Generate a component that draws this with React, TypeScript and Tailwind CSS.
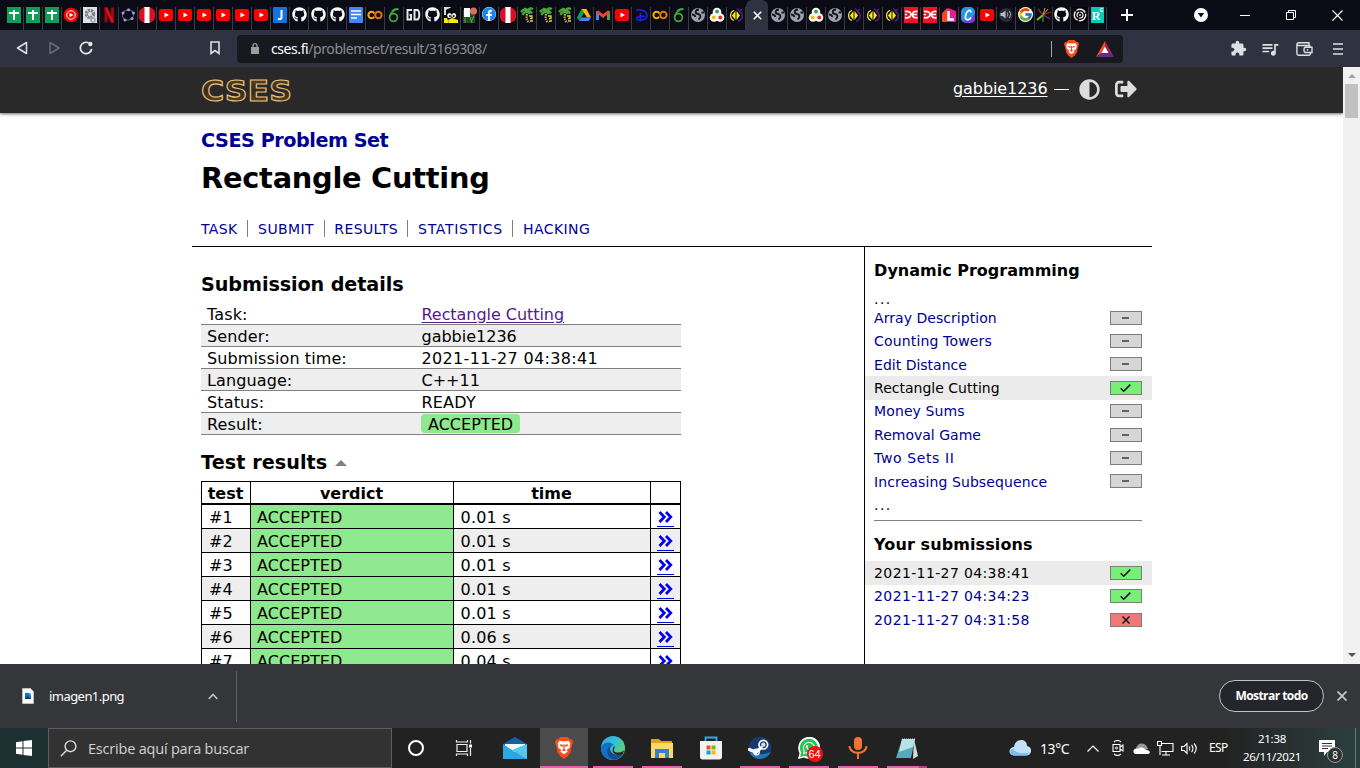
import React from "react";
import { FaGithub, FaFacebook, FaAdjust, FaSignOutAlt, FaWhatsapp } from "react-icons/fa";
import { FcGoogle } from "react-icons/fc";
import { MdExtension, MdQueueMusic } from "react-icons/md";

type IconProps = { children: React.ReactNode; w?: number; h?: number; box?: string };

function Glyph({ children, w = 16, h = 16, box = "0 0 16 16" }: IconProps) {
  return (
    <svg width={w} height={h} viewBox={box} fill="none" className="block shrink-0">
      {children}
    </svg>
  );
}

const favicons: Record<string, React.ReactNode> = {
  sheets: (
    <Glyph>
      <path fill="#0f9d58" d="M1 0h14v16H1z" />
      <path stroke="#fff" strokeWidth="2" d="M3 6h10M8 3v10" />
    </Glyph>
  ),
  music: (
    <Glyph>
      <circle cx="8" cy="8" r="7.3" fill="#f00" />
      <circle cx="8" cy="8" r="4.3" stroke="#fff" />
      <path fill="#fff" d="m6.5 5.7 4 2.3-4 2.3z" />
    </Glyph>
  ),
  gear: (
    <Glyph>
      <path fill="#dfe2e4" d="M1 0h14v16H1z" />
      <circle cx="8" cy="7" r="3.6" stroke="#7b858b" strokeWidth="3.4" strokeDasharray="2.2 .7" />
      <circle cx="11" cy="13" r="2" stroke="#9ba4a9" strokeWidth="1.5" />
    </Glyph>
  ),
  netflix: (
    <Glyph>
      <path fill="#9d0710" d="M3.500 0.500h3v15h-3zM10 .5h3v15h-3z" />
      <path fill="#e50914" d="M3.500.5h3l6.500 15h-3z" />
    </Glyph>
  ),
  geogebra: (
    <Glyph>
      <ellipse cx="8" cy="8" rx="5.700" ry="5" stroke="#666" transform="rotate(-20 8 8)" />
      <g fill="#9999ff">
        <circle cx="3" cy="6" r="1.500" /><circle cx="8.500" cy="2.700" r="1.500" />
        <circle cx="13.500" cy="6" r="1.500" /><circle cx="12" cy="11.600" r="1.500" /><circle cx="5" cy="13" r="1.500" />
      </g>
    </Glyph>
  ),
  peru: (
    <Glyph>
      <path fill="#fff" d="M5 0h6v16H5z" />
      <path fill="#d91023" d="M5.500.3a8 8 0 0 0 0 15.400zM10.500.3a8 8 0 0 1 0 15.400z" />
    </Glyph>
  ),
  youtube: (
    <Glyph>
      <rect x="1" y="2" width="14" height="12" rx="2" fill="#f00" />
      <path fill="#fff" d="m6.500 5.500 4.500 2.500-4.500 2.500z" />
    </Glyph>
  ),
  jbox: (
    <Glyph>
      <rect x="1" width="14" height="16" rx="1" fill="#1374e0" />
      <path stroke="#fff" strokeWidth="2" d="M9.500 3v7.500c0 1.800-2 2.200-3.500 1" />
    </Glyph>
  ),
  github: <FaGithub size={15} color="#fff" />,
  docs: (
    <Glyph>
      <rect x="1" width="14" height="16" rx="1" fill="#4285f4" />
      <path stroke="#fff" strokeWidth="1.700" d="M3 4h10M3 7.500h10M3 11h6" />
    </Glyph>
  ),
  colab: (
    <Glyph>
      <circle cx="4.600" cy="8" r="3.200" stroke="#f9ab00" strokeWidth="2" strokeDasharray="16 4" strokeDashoffset="-2" />
      <circle cx="11.400" cy="8" r="3.200" stroke="#e8710a" strokeWidth="2" />
    </Glyph>
  ),
  overleaf: (
    <Glyph>
      <circle cx="7.500" cy="10.500" r="3.900" stroke="#47a141" strokeWidth="1.800" />
      <path stroke="#47a141" strokeWidth="1.700" d="M4 9C5 5 8 2.500 12.500 1.800M6 4c2-2 4-2.300 6-2.200" />
    </Glyph>
  ),
  gd: (
    <Glyph>
      <path stroke="#e8e8e8" strokeWidth="2" d="M7 3H2.500v9.500H6V8H4.500M9.500 3v9.500H12c3 0 3-9.500 0-9.500H9.500z" />
    </Glyph>
  ),
  penguin: (
    <Glyph>
      <path fill="#d4dce0" d="M1 0h7L3 8H1z" />
      <path fill="#050505" d="M3 3c5-4 10-1 10 4l2 8H3z" />
      <ellipse cx="6.500" cy="8.500" rx="2.300" ry="2.500" fill="#fff" /><ellipse cx="11" cy="8.500" rx="2.100" ry="2.500" fill="#fff" />
      <circle cx="7" cy="9" r="1" fill="#000" /><circle cx="10.700" cy="9" r="1" fill="#000" />
      <path fill="#ffe600" d="m5 13 4-2 6 2v3H6z" />
      <path fill="#ffe600" d="M1 11h3l2 5H1z" />
    </Glyph>
  ),
  robot: (
    <Glyph>
      <path fill="#21501e" d="M1 3h12v13H1z" />
      <path fill="#fff" d="M2 1h6v9H2z" />
      <circle cx="11.500" cy="4" r="3.500" fill="#e0705c" />
      <path stroke="#63a34f" d="M3 11v5M8 10l2 6M12 9l-3 6" />
    </Glyph>
  ),
  facebook: <FaFacebook size={14} color="#1785f5" className="rounded-full bg-white" />,
  palm: (
    <Glyph>
      <path stroke="#4da33e" strokeWidth="2.400" d="M2 5c3-4 5-2 6 0M5 2c2-.5 3 0 4 2 1-3 3-3 5-2M3.500 8c1-3 4-4 8-2M8 4.500c2-1 4 0 5 2" />
      <path stroke="#cbb936" strokeWidth="2.200" strokeDasharray="1.500 .8" d="M8 7c-1 4 0 6 2 9" />
      <path stroke="#e8cf45" strokeWidth="1.300" d="M10 9h3v2.500h-2M11 14h3" />
    </Glyph>
  ),
  drive: (
    <Glyph>
      <path fill="#0f9d58" d="M5.500 2 1 10.500 3.200 14 8 6z" />
      <path fill="#ffba00" d="M5.500 2h5L15 10.500h-4z" />
      <path fill="#4285f4" d="M5.500 10.500H15L12.800 14H3.200z" />
    </Glyph>
  ),
  gmail: (
    <Glyph>
      <path fill="#4285f4" d="M1 4h3v9H1z" /><path fill="#34a853" d="M12 4h3v9h-3z" />
      <path stroke="#ea4335" strokeWidth="3" d="M2 4.500 8 9l6-4.500" />
    </Glyph>
  ),
  disney: (
    <Glyph>
      <path stroke="#1822dc" strokeWidth="1.700" d="M3 3c7-1 11 2 11 5.500 0 4.500-8 6-10 3.500-2-2 5-3.500 8-2.500M7.500 6v7.500" />
    </Glyph>
  ),
  globe: (
    <Glyph>
      <circle cx="8" cy="8" r="7" fill="#9ca3ad" />
      <path stroke="#11141c" strokeWidth="1.800" d="M9 2.500C4.500 3 5 6.500 8 7s3.500 3 .5 5.500M2 7.500c2 0 3 1 3.500 2.500M11.500 5.500H14" />
    </Glyph>
  ),
  balls: (
    <Glyph>
      <g fill="#fff"><circle cx="8" cy="5" r="4.300" /><circle cx="5" cy="10.500" r="4.300" /><circle cx="11" cy="10.500" r="4.300" /></g>
      <circle cx="8" cy="4.500" r="2" fill="#34a853" /><circle cx="4.700" cy="10.500" r="2" fill="#fbbc04" /><circle cx="11.300" cy="10.500" r="2" fill="#e6332a" />
    </Glyph>
  ),
  hive: (
    <Glyph>
      <path stroke="#52217a" strokeWidth="1.600" d="M9 1.500 11.500 4 14 2M11 5c4-.5 5 8-1 9" />
      <path stroke="#f5e838" strokeWidth="1.300" d="M6 3.500C1.500 5 1.500 12 6 13.500" />
      <path fill="#ffec1c" d="M7.500 4v9L4 8.500zM8.500 4 12 8.500 8.500 13z" />
    </Glyph>
  ),
  oe: (
    <Glyph>
      <path fill="#f11225" d="M1 0h14v16H1z" />
      <path stroke="#fff" strokeWidth="1.700" d="M2 4.500c4-.5 6 1 6 3s-2 3.700-6 3.200M14.500 4.500c-3-.5-5 .5-5 3s2 3.700 5 3.200M8 7.500h6M2 7.500h2" />
    </Glyph>
  ),
  lbox: (
    <Glyph>
      <path fill="#e81c8e" d="M1 15V6l6-5 8 3v11z" /><path fill="#f8481a" d="M1 15V7l5-6v14z" />
      <path stroke="#fff" strokeWidth="2.500" d="M7.500 4v8.500H13" />
    </Glyph>
  ),
  canva: (
    <Glyph>
      <rect x="1" width="14" height="16" rx="5" fill="#2597de" />
      <path fill="#7338e0" d="M3 14c4-2 9-1 12-8v6c0 3-2 4-5 4H6c-1 0-2-1-3-2z" />
      <path stroke="#fff" strokeWidth="1.700" d="M10.500 5.500c1-2-1-3-3-1s-3 7-1 8 4-1 4.500-2" />
    </Glyph>
  ),
  audio: (
    <Glyph>
      <circle cx="8" cy="8" r="7" fill="#292b39" />
      <path fill="#bbbdc6" d="M2.500 6h2L7.500 3.500v8L4.500 9h-2z" />
      <path stroke="#bbbdc6" d="M9 5.500c1 1 1 3 0 4M11 4c2 2 2 5 0 7" />
    </Glyph>
  ),
  google: <FcGoogle size={15} className="rounded-full bg-white" />,
  spider: (
    <Glyph>
      <path stroke="#7bbf2e" strokeWidth="2" d="M1 13 7 8" /><path stroke="#8a3420" strokeWidth="1.200" d="m7 8-5-6M7 8l8-3" />
      <path stroke="#d8a63c" d="m7 8 2-7M7 8l5-6" /><path stroke="#60388f" strokeWidth="1.200" d="m7 8 7 4" /><path stroke="#68a637" d="M7 8v7" />
    </Glyph>
  ),
  swirl: (
    <Glyph>
      <path fill="#050505" d="M1 0h14v16H1z" />
      <circle cx="8" cy="8" r="5.700" stroke="#eee" strokeWidth="1.400" strokeDasharray="10 1.200" />
      <circle cx="8" cy="8" r="3" stroke="#eee" strokeWidth="1.200" strokeDasharray="6 1" />
      <circle cx="8" cy="8" r="1" fill="#ddd" />
    </Glyph>
  ),
  rg: (
    <span className="flex h-4 w-[13px] justify-center bg-[#00ccbb] text-white">
      <span className="pt-[3px] font-['Liberation_Serif',serif] text-[12px] leading-[13px] font-bold">R</span>
      <span className="-ml-px text-[5px] leading-[7px] font-bold">G</span>
    </span>
  ),
};

const leftTabs = (
  "sheets sheets sheets music gear netflix geogebra peru youtube youtube youtube youtube youtube youtube jbox github github github docs " +
  "colab overleaf gd github penguin robot facebook peru palm palm palm drive gmail youtube disney colab overleaf globe balls hive"
).split(" ");
const midTabs = "globe globe balls globe hive hive hive oe oe lbox canva youtube audio google".split(" ");
const endTabs = "spider github swirl rg".split(" ");

function Tab({ name, narrow }: { name: string; narrow?: boolean }) {
  return (
    <div className={`${narrow ? "w-[18px]" : "w-[19px]"} flex h-[23px] shrink-0 items-start justify-center border-r border-[#3a3a42]`}>
      {favicons[name]}
    </div>
  );
}

function TabStrip() {
  return (
    <div className="flex h-[30px] shrink-0 bg-[#0b0b15] pl-[5px]">
      <div className="flex pt-[7px]">{leftTabs.map((n, i) => <Tab key={i} name={n} />)}</div>
      <div className="flex w-[22px] items-center justify-center rounded-t-md bg-[#2f3241]">
        <Glyph w={9} h={9} box="0 0 9 9"><path stroke="#fff" strokeWidth="1.600" d="m.8.8 7.400 7.400M8.200.8.8 8.200" /></Glyph>
      </div>
      <div className="flex pt-[7px] pl-px">
        {midTabs.map((n, i) => <Tab key={i} name={n} />)}
        {endTabs.map((n, i) => <Tab key={i} name={n} narrow />)}
      </div>
      <div className="ml-[14px] flex items-center">
        <Glyph w={12} h={12} box="0 0 12 12"><path stroke="#fff" strokeWidth="2" d="M6 0v12M0 6h12" /></Glyph>
      </div>
      <div className="ml-auto flex items-center pr-[17px]">
        <Glyph w={14} h={14} box="0 0 14 14"><circle cx="7" cy="7" r="7" fill="#fff" /><path fill="#0b0b15" d="M3.800 5h6.400L7 9.500z" /></Glyph>
        <span className="ml-8 h-px w-[10px] bg-white" />
        <span className="ml-9"><Glyph w={10} h={10} box="0 0 10 10"><path stroke="#fff" d="M.5 2.500h7v7h-7zM2.500 2V.5h7v7H8" /></Glyph></span>
        <span className="ml-9"><Glyph w={11} h={11} box="0 0 11 11"><path stroke="#fff" strokeWidth="1.200" d="m.5.5 10 10M10.500.5l-10 10" /></Glyph></span>
      </div>
    </div>
  );
}

const lionShield = "M8 0h8l2 2 3 1 1 3-1 2-2 9-3 4-4 3-4-3-3-4L3 8 2 6l1-3 3-1z";

function Lion({ w, h }: { w: number; h: number }) {
  return (
    <Glyph w={w} h={h} box="1 0 22 24">
      <path fill="#fb4a1c" d={lionShield} />
      <path fill="#fff" d="m7 4 3 .7h4L17 4l2 3-1 5-3 2 1 2-4 3-4-3 1-2-3-2-1-5z" />
      <path fill="#fb4a1c" d="m8 8 3 .8-.5 2L7 9zM16 8l-3 .8.500 2L17 9zM11.300 8h1.400v5l1.500 1.500-2.200 1-2.200-1 1.500-1.500z" />
    </Glyph>
  );
}

function Toolbar() {
  return (
    <div className="flex h-[37px] shrink-0 items-center bg-[#2f3241]">
      <div className="flex w-[237px] items-center pb-px pl-4">
        <Glyph w={12} h={14} box="0 0 12 14"><path stroke="#dedfe2" strokeWidth="1.500" strokeLinejoin="round" d="M10.500 1.500v11L1.500 7z" /></Glyph>
        <span className="ml-[21px]"><Glyph w={12} h={14} box="0 0 12 14"><path stroke="#686b78" strokeWidth="1.500" strokeLinejoin="round" d="M1 1.500v11L10 7z" /></Glyph></span>
        <span className="ml-[18px]">
          <Glyph w={14} h={14} box="0 0 14 14"><path stroke="#e9e9ec" strokeWidth="1.700" d="M9.500 1.800A5.700 5.700 0 1 0 12.700 8" /><circle cx="11.300" cy="3" r="2.200" fill="#e9e9ec" /></Glyph>
        </span>
        <span className="ml-[117px]"><Glyph w={10} h={14} box="0 0 10 14"><path stroke="#dedfe2" strokeWidth="1.600" d="M1 1h8v11.500L5 9.500l-4 3z" /></Glyph></span>
      </div>
      <div className="flex h-7 w-[886px] items-center rounded bg-[#17191f] pl-[14px] font-['Noto_Sans',sans-serif] text-[14px]">
        <Glyph w={8} h={11} box="0 0 8 11"><path fill="#9a9da4" d="M0 4h8v7H0z" /><path stroke="#9a9da4" strokeWidth="1.300" d="M2 5V2.700a2 2 0 0 1 4 0V5" /></Glyph>
        <span className="ml-3 tracking-[-0.42px] text-[#8b8d92]"><span className="text-white">cses.fi</span>/problemset/result/3169308/</span>
        <div className="ml-auto flex items-center pr-[9px]">
          <span className="mr-[11px] h-4 w-px bg-[#a5a6ab]" />
          <Lion w={17} h={18} />
          <span className="ml-4">
            <Glyph w={18} h={16} box="0 0 18 16"><path fill="#ff4724" d="M9 0 0 16l6-4 3-6z" /><path fill="#9e1f63" d="m9 0 9 16-6-4-3-6z" /><path fill="#662d91" d="M0 16h18l-6-4H6z" /><path fill="#fff" d="m9 5.500 3.500 6.500h-7z" /></Glyph>
          </span>
        </div>
      </div>
      <div className="flex flex-1 items-center justify-end pr-[17px] text-[#dedfe2]">
        <MdExtension size={17} />
        <MdQueueMusic size={20} className="ml-[13px]" />
        <span className="ml-[16px]">
          <Glyph w={17} h={14} box="0 0 17 14"><path stroke="#dedfe2" strokeWidth="1.400" d="M14 3.500H2.500a1.400 1.400 0 0 1 0-2.800H13v2.500M.9 2v9.500c0 1 .8 1.700 1.700 1.700H13c.8 0 1.400-.6 1.400-1.400V10.500M14 3.500v1.500M9.500 5.200H16v5.300H9.500c-2 0-2-5.300 0-5.300z" /><circle cx="11.500" cy="7.800" r=".9" fill="#dedfe2" /></Glyph>
        </span>
        <span className="ml-[20px]"><Glyph w={10} h={12} box="0 0 10 12"><path stroke="#dedfe2" strokeWidth="1.500" d="M0 1h10M0 6h10M0 11h10" /></Glyph></span>
      </div>
    </div>
  );
}

function SiteHeader() {
  return (
    <div className="flex h-[46px] shrink-0 items-center bg-[#292929] shadow-[0_1px_3px_rgba(0,0,0,0.6)]">
      <div className="mx-auto flex w-[960px] items-center px-[9px]">
        <svg width="92" height="28" viewBox="0 0 92 28" className="-mt-px block">
          <defs>
            <linearGradient id="gold" x1="0" x2="0" y1="0" y2="1"><stop offset="0" stopColor="#6b4c22" /><stop offset=".5" stopColor="#332a1f" /><stop offset="1" stopColor="#6b4c22" /></linearGradient>
          </defs>
          <text x="0" y="24.500" textLength="91" lengthAdjust="spacingAndGlyphs" fontFamily="DejaVu Sans" fontWeight="700" fontSize="29" fill="url(#gold)" stroke="#e8c07d" strokeWidth="1.100">CSES</text>
        </svg>
        <div className="ml-auto flex items-center pr-[6px] text-[16px] text-white">
          <span className="-mt-[2px] tracking-[-0.08px] underline underline-offset-2">gabbie1236</span>
          <span className="mb-px ml-[6px] h-px w-[15px] bg-white" />
          <FaAdjust size={21} color="#dcdcdc" className="mb-[2px] ml-[10px]" />
          <FaSignOutAlt size={22} color="#dcdcdc" className="mb-[2px] ml-[15px]" />
        </div>
      </div>
    </div>
  );
}

const nav = [
  { label: "TASK", cls: "pr-[9px] w-[47px] pl-[0.6px] tracking-[0.3px]" },
  { label: "SUBMIT", cls: "w-[77px] pl-[10.6px] tracking-[0.4px]" },
  { label: "RESULTS", cls: "w-[83px] pl-[9.8px] tracking-[0.4px]" },
  { label: "STATISTICS", cls: "w-[105px] pl-[10.6px] tracking-[0.7px]" },
  { label: "HACKING", cls: "pl-[10.6px] tracking-[0.4px]" },
];

const details = [
  ["Task:", "Rectangle Cutting"],
  ["Sender:", "gabbie1236"],
  ["Submission time:", "2021-11-27 04:38:41"],
  ["Language:", "C++11"],
  ["Status:", "READY"],
  ["Result:", "ACCEPTED"],
];

const valueStyle = [
  "pt-px text-[#551a8b] underline underline-offset-2 tracking-[-0.05px]",
  "pt-px",
  "pt-px tracking-[0.35px]",
  "pt-px",
  "pt-px tracking-[0.2px]",
  "h-[19px] rounded bg-[#8ee88e] px-[6.5px] pt-px tracking-[0.02px]",
];

const times = ["0.01 s", "0.01 s", "0.01 s", "0.01 s", "0.01 s", "0.06 s", "0.04 s"];

function Chevrons() {
  return (
    <span className="block h-4 w-[17px] border-b border-[#0000ee] pl-px">
      <Glyph w={15} h={13} box="0 0 15 13"><path stroke="#0000ee" strokeWidth="2.700" d="m1.500 1 4.800 5-4.800 5M8 1l4.800 5L8 11" /></Glyph>
    </span>
  );
}

type Status = "none" | "ok" | "bad";

function Badge({ status }: { status: Status }) {
  const bg = status === "none" ? "bg-[#d6d6d6]" : status === "ok" ? "bg-[#78f078]" : "bg-[#f07878]";
  return (
    <span className={`flex h-[14px] w-8 items-center justify-center border border-[#7c7c7c] ${bg}`}>
      {status === "none" && <span className="h-[2px] w-[7px] bg-[#626262]" />}
      {status === "ok" && <Glyph w={11} h={8} box="0 0 11 8"><path stroke="#111" strokeWidth="1.500" d="m.7 4.300 3 2.900L10.300.6" /></Glyph>}
      {status === "bad" && <Glyph w={8} h={8} box="0 0 8 8"><path stroke="#111" strokeWidth="1.500" d="m.5.5 7 7M7.500.5l-7 7" /></Glyph>}
    </span>
  );
}

function SideRow({ text, status, current, cls }: { text: string; status: Status; current?: boolean; cls?: string }) {
  return (
    <div className={`flex h-[23.4px] shrink-0 items-center justify-between pr-[10px] pl-[9.6px] text-[14px] ${current ? "bg-[#ebebeb] text-black" : "text-[#000094]"}`}>
      <span className={`pt-[1.4px] ${cls ?? ""}`}>{text}</span>
      <Badge status={status} />
    </div>
  );
}

const tasks: { text: string; status: Status; current?: boolean; cls?: string }[] = [
  { text: "Array Description", status: "none", cls: "tracking-[0.04px]" },
  { text: "Counting Towers", status: "none", cls: "tracking-[0.15px]" },
  { text: "Edit Distance", status: "none" },
  { text: "Rectangle Cutting", status: "ok", current: true },
  { text: "Money Sums", status: "none", cls: "tracking-[0.1px]" },
  { text: "Removal Game", status: "none" },
  { text: "Two Sets II", status: "none", cls: "tracking-[0.6px]" },
  { text: "Increasing Subsequence", status: "none", cls: "tracking-[0.1px]" },
];

function Page() {
  return (
    <div className="flex h-[597px] shrink-0 overflow-hidden bg-white font-['DejaVu_Sans',sans-serif] text-black">
      <div className="flex w-[1343px] flex-col">
        <SiteHeader />
        <div className="mx-auto flex w-[960px] flex-1 flex-col">
          <div className="h-[134px] shrink-0 border-b border-black px-[9px] pt-[17px]">
            <div className="pl-[0.6px] text-[19.2px] leading-[22px] font-bold tracking-[-0.46px] text-[#000094]">CSES Problem Set</div>
            <h1 className="mt-[9px] pl-[0.6px] text-[28.8px] leading-[34px] font-bold tracking-[-0.25px]">Rectangle Cutting</h1>
            <div className="mt-[25px] flex text-[14px] leading-[19px] text-[#000094]">
              {nav.map((n, i) => (
                <span key={n.label} className={`h-[17px] shrink-0 ${n.cls} ${i < nav.length - 1 ? "border-r border-[#808080]" : ""}`}>{n.label}</span>
              ))}
            </div>
          </div>
          <div className="flex flex-1">
            <div className="w-[672px] px-[9px] pt-[27px]">
              <h2 className="pl-[0.6px] text-[19.2px] leading-[22px] font-bold tracking-[-0.1px]">Submission details</h2>
              <div className="mt-[7px] w-[480px] text-[16px]">
                {details.map(([k, v], i) => (
                  <div key={k} className={`flex h-[22px] items-center border-b border-[#808080] pl-[6.6px] leading-[19px] ${i % 2 ? "bg-[#eeeeee]" : ""}`}>
                    <span className="w-[214.4px] pt-px tracking-[0.1px]">{k}</span>
                    <span className={valueStyle[i]}>{v}</span>
                  </div>
                ))}
              </div>
              <div className="mt-[17px] flex items-center pl-[0.6px] text-[19.2px] leading-[22px] font-bold tracking-[0.05px]">
                Test results
                <span className="ml-2"><Glyph w={12} h={6} box="0 0 12 6"><path fill="#808080" d="m6 0 6 6H0z" /></Glyph></span>
              </div>
              <div className="mt-[7px] w-[480px] border-t border-l border-black text-[16px]">
                <div className="grid h-[23px] grid-cols-[49px_203px_197px_30px] divide-x divide-black border-r border-b-2 border-black text-center leading-[23px] font-bold">
                  <span>test</span><span>verdict</span><span>time</span><span />
                </div>
                {times.map((t, i) => (
                  <div key={i} className={`grid h-6 grid-cols-[49px_203px_197px_30px] divide-x divide-black border-r border-b border-black leading-[25px] ${i % 2 ? "bg-[#eeeeee]" : ""}`}>
                    <span className="h-[23px] pl-[7.6px]">#{i + 1}</span>
                    <span className="h-[23px] bg-[#8ee88e] pl-[6.6px] tracking-[0.02px]">ACCEPTED</span>
                    <span className="h-[23px] pl-[7px] tracking-[0.2px]">{t}</span>
                    <span className="h-[23px] pt-[6px] pl-[6px]"><Chevrons /></span>
                  </div>
                ))}
              </div>
            </div>
            <div className="w-[288px] border-l border-black pt-[14px]">
              <h4 className="pl-[9.6px] text-[16px] leading-[20px] font-bold">Dynamic Programming</h4>
              <div className="mt-[8px] h-[17px] pl-[9.6px] text-[14px] leading-[21px] tracking-[1.4px]">...</div>
              {tasks.map((t) => <SideRow key={t.text} {...t} />)}
              <div className="h-[27px] pl-[9.6px] text-[14px] leading-[25px] tracking-[1.4px]">...</div>
              <div className="mx-[9px] mr-[10px] h-px bg-[#808080]" />
              <h4 className="mt-[14px] mb-[6px] pl-[9.6px] text-[16px] leading-[20px] font-bold tracking-[0.1px]">Your submissions</h4>
              <SideRow text="2021-11-27 04:38:41" status="ok" current cls="tracking-[0.37px]" />
              <SideRow text="2021-11-27 04:34:23" status="ok" cls="tracking-[0.37px]" />
              <SideRow text="2021-11-27 04:31:58" status="bad" cls="tracking-[0.37px]" />
            </div>
          </div>
        </div>
      </div>
      <div className="flex w-[17px] flex-col items-center bg-[#f1f1f1] py-[7px]">
        <Glyph w={8} h={4} box="0 0 8 4"><path fill="#a3a3a3" d="m4 0 4 4H0z" /></Glyph>
        <span className="mt-[6px] h-[34px] w-[13px] bg-[#c1c1c1]" />
        <span className="mt-auto"><Glyph w={8} h={4} box="0 0 8 4"><path fill="#505050" d="M0 0h8L4 4z" /></Glyph></span>
      </div>
    </div>
  );
}

function DownloadBar() {
  return (
    <div className="flex h-16 shrink-0 items-center bg-[#35363a] font-['Noto_Sans',sans-serif] text-[13px] text-white">
      <div className="flex h-[51px] w-[237px] items-center border-r border-[#5f6064] pl-[22px]">
        <Glyph w={12} h={16} box="0 0 12 16"><path fill="#fafafa" stroke="#bdbdbd" d="M.5.500h8l3 3v12H.5z" /><path fill="#0b74bd" d="M3 5h6v6H3z" /><path fill="#5ec8f2" d="M6.500 5H9v3z" /><path fill="#0a3970" d="m3 11 2-3 4 3z" /></Glyph>
        <span className="ml-[15px] pt-px tracking-[-0.55px]">imagen1.png</span>
        <span className="ml-auto mr-[18px]"><Glyph w={10} h={7} box="0 0 10 7"><path stroke="#c4c4c6" strokeWidth="1.600" d="m.7 6 4.300-4.500L9.300 6" /></Glyph></span>
      </div>
      <div className="ml-auto flex h-8 w-[105px] items-center justify-center rounded-full border border-[#c2c0d4] bg-[#25262b] font-['Open_Sans',sans-serif] text-[12px] font-bold tracking-[-0.55px]">Mostrar todo</div>
      <span className="mr-[13px] ml-[13px]"><Glyph w={10} h={10} box="0 0 10 10"><path stroke="#c4c4c6" strokeWidth="1.800" d="m.5.5 9 9M9.500.5l-9 9" /></Glyph></span>
    </div>
  );
}

function Slot({ children, cls = "w-[49px]", line }: { children: React.ReactNode; cls?: string; line?: string }) {
  return (
    <div className={`relative flex h-10 shrink-0 items-center justify-center ${cls}`}>
      {children}
      {line && <span className={`absolute bottom-0 left-1/2 h-[2px] -translate-x-1/2 bg-[#e062b0] ${line}`} />}
    </div>
  );
}

function Taskbar() {
  return (
    <div className="flex h-10 shrink-0 items-center bg-linear-to-r from-[#222222] from-90% to-[#2c4040] font-['Noto_Sans',sans-serif] text-white">
      <div className="flex h-10 w-12 items-center justify-center bg-[#1c2f31]">
        <Glyph><path fill="#fff" d="m0 2.200 6.500-.9v6.200H0zM7.500 1.100 16 0v7.500H7.500zM0 8.500h6.500v6.200L0 13.800zM7.500 8.500H16V16l-8.500-1.100z" /></Glyph>
      </div>
      <div className="flex h-10 w-[344px] items-center border border-[#5c5c5c] bg-[#323232] pl-[11px] text-[#d2d2d2]">
        <Glyph w={17} h={17} box="0 0 17 17"><circle cx="10.500" cy="6.300" r="5.400" stroke="#ddd" strokeWidth="1.400" /><path stroke="#ddd" strokeWidth="1.400" d="M6.700 10.200.8 16.200" /></Glyph>
        <span className="ml-[11px] pt-px font-['Open_Sans',sans-serif] text-[14.5px] tracking-[-0.2px]">Escribe aquí para buscar</span>
      </div>
      <Slot cls="w-12"><span className="size-4 rounded-full border-[2px] border-white" /></Slot>
      <Slot cls="w-[47px]">
        <Glyph w={18} h={16} box="0 0 18 16"><path stroke="#f2f2f2" strokeWidth="1.200" d="M2 4.500h10v7H2zM1.500 0v2h11V0M1.500 16v-2h11v2M15.500 0v3.500M15.500 8v8" /><path fill="#fff" d="M14 4.500h3v3h-3z" /></Glyph>
      </Slot>
      <Slot cls="w-[53px] pl-[3px]">
        <Glyph w={24} h={22} box="0 0 24 22"><path fill="#0f62a8" d="M0 7 12 0l12 7v5H0z" /><path fill="#f5f5f5" d="M2 7h20v8H2z" /><path fill="#2ba7e2" d="m0 7 12 8 12-8v15H0z" /><path fill="#50c8f0" d="m9 13 15-6v15z" /></Glyph>
      </Slot>
      <Slot cls="w-12 bg-[#4b4b4b]" line="w-12"><Lion w={20} h={24} /></Slot>
      <Slot line="w-10">
        <svg width="24" height="24" viewBox="0 0 24 24">
          <defs><linearGradient id="edge" x1="0" x2="1" y1="0" y2=".7"><stop offset="0" stopColor="#27a8df" /><stop offset=".5" stopColor="#33bfd6" /><stop offset="1" stopColor="#66d95a" /></linearGradient></defs>
          <circle cx="12" cy="12" r="12" fill="url(#edge)" />
          <path fill="#1270c4" d="M0 12c1-5 8-8 13-3-5 0-6 9 1 10 3 .6 6 0 8-1-2 4-6 6-10 6C5 24 0 19 0 12z" />
          <path fill="#164a92" d="M9 10c-5 4-3 13 5 13.500 4-1 6-3 8-5.500-9 3-14-2-13-8z" />
          <path fill="#222" d="M13 10c2 2-2 4 1 6 3 1.500 8 0 9-2l-1 4c-8 3-13-2-9-8z" />
        </svg>
      </Slot>
      <Slot line="w-10">
        <Glyph w={22} h={19} box="0 0 22 19"><path fill="#e0a21c" d="M0 0h8l2 2h11v4H0z" /><path fill="#ffd766" d="M0 4h22v15H0z" /><path fill="#2c86cf" d="M4 10h14v9h-4v-5H8v5H4z" /></Glyph>
      </Slot>
      <Slot>
        <Glyph w={24} h={24} box="0 0 24 24"><path stroke="#29aee6" strokeWidth="1.800" d="M6.500 6V1.500h11V6" /><path fill="#f2f2f2" d="M1 5h22v16c0 1.500-1 2.500-2.500 2.500h-17C2 23.500 1 22.500 1 21z" /><path fill="#f25022" d="M7.500 9.500h4v4h-4z" /><path fill="#7fba00" d="M12.500 9.500h4v4h-4z" /><path fill="#00a4ef" d="M7.500 14.500h4v4h-4z" /><path fill="#ffb900" d="M12.500 14.500h4v4h-4z" /></Glyph>
      </Slot>
      <Slot line="w-10">
        <Glyph w={24} h={24} box="0 0 24 24">
          <circle cx="12" cy="12" r="11.300" fill="#173a70" /><path fill="#2478b5" d="M1.500 16c7 3 14 3 21 0-3 9-18 9-21 0z" />
          <circle cx="15.300" cy="8.700" r="4.300" stroke="#fff" strokeWidth="1.700" /><circle cx="15.300" cy="8.700" r="2.200" fill="#d7dde5" />
          <path stroke="#fff" strokeWidth="3.200" strokeLinecap="round" d="m1.500 13.500 6.500 2.800 5-4.500" /><circle cx="8.500" cy="16" r="2.800" stroke="#fff" strokeWidth="1.300" />
        </Glyph>
      </Slot>
      <Slot line="w-10">
        <span className="relative flex size-[22px] items-center justify-center">
          <Glyph w={22} h={22} box="0 0 22 22"><path fill="#fff" d="m0 22 1.500-6A11 11 0 1 1 6 20.500z" /><path fill="#2ac255" d="m2 20 1.200-4.500a9 9 0 1 1 3.600 3.300z" /></Glyph>
          <FaWhatsapp size={14} color="#fff" className="absolute" />
          <span className="absolute top-[9px] left-[9px] flex size-4 items-center justify-center rounded-full bg-[#f01010] font-['Liberation_Sans',sans-serif] text-[11px]">64</span>
        </span>
      </Slot>
      <Slot line="w-10">
        <Glyph w={20} h={22} box="0 0 20 22"><rect x="6" width="8" height="13" rx="4" fill="#f47334" /><path stroke="#f47334" strokeWidth="2" d="M1.500 9c0 9 17 9 17 0M10 15.500V22" /></Glyph>
      </Slot>
      <Slot line="w-10">
        <Glyph w={24} h={21} box="0 0 24 21"><path fill="#d9d9cd" d="m19 1 4 17-5 3z" /><path fill="#58a8b8" d="M7 1h13l-4 19H1z" /><path fill="#b5e3e8" d="M7 1h13l-2 8L4 14z" /><path stroke="#ddd" strokeDasharray="1 1" d="M7 1h13" /></Glyph>
      </Slot>
      <span className="relative -ml-[12px] h-[2px] w-2 self-end bg-[#a34b83]" />
      <div className="ml-auto flex h-10 items-center">
        <Glyph w={22} h={16} box="0 0 22 16"><path fill="#c0e1fb" d="M5 15.500C-2 15 0 7 5 7c1-9 13-9 13-1 6 1 5 9 0 9.500z" /><path fill="#7fbdf0" d="M5 15.500c-5-1-5-6-1-7 1 4 11 6 16 4-1 2-2 3-4 3z" /></Glyph>
        <span className="ml-[9px] w-[31px] pt-px text-[14px] tracking-[-0.4px]">13°C</span>
        <span className="ml-[16px]"><Glyph w={12} h={7} box="0 0 12 7"><path stroke="#fff" strokeWidth="1.200" d="m.5 6.500 5.500-5.500 5.500 5.500" /></Glyph></span>
        <span className="ml-[13px]"><Glyph w={12} h={16} box="0 0 12 16"><path stroke="#fff" strokeWidth="1.100" d="M1 4.500h7v7H1zM8 7l3-2v6L8 9M2 2c2-2 5-2 7 0M2 14c2 2 5 2 7 0" /><circle cx="4.500" cy="8" r="1" stroke="#fff" /></Glyph></span>
        <span className="ml-[9px]"><Glyph w={17} h={11} box="0 0 17 11"><path fill="#999" d="M3 8c-1-8 9-11 12-2L9 9z" /><path fill="#fff" d="M3 11c-5-1-2-7 2-5 3-3 6-1 8 1 5 0 5 4 1 4z" /></Glyph></span>
        <span className="ml-[7px]"><Glyph w={17} h={15} box="0 0 17 15"><path stroke="#fff" strokeWidth="1.100" d="M5 2.500h11v8H4.500M9 10.500v3M5 14h8M3 5v9M.5.500h4v4h-4z" /></Glyph></span>
        <span className="ml-[7px]"><Glyph w={17} h={13} box="0 0 17 13"><path stroke="#fff" strokeWidth="1.100" d="M.6 4.500h2.500L6 1.500v10L3.100 8.500H.6zM8 4.500c1 1 1 3 0 4M10.500 3c2 2 2 5 0 7M13 1.500c3 3 3 7 0 10" /></Glyph></span>
        <span className="ml-[11px] w-[19px] text-[12px] tracking-[-0.6px]">ESP</span>
        <span className="ml-[14px] flex w-[60px] flex-col items-center text-[11.5px] leading-[18px] tracking-[-0.3px]">
          <span>21:38</span><span>26/11/2021</span>
        </span>
        <span className="relative ml-[17px] block h-4 w-[29px]">
          <Glyph w={16} h={16} box="0 0 16 16"><path fill="#fff" d="M0 0h16v12H8l-3 4v-4H0z" /><path stroke="#333" d="M3 3.500h10M3 6h10M3 8.500h6" /></Glyph>
          <span className="absolute top-[7px] left-[8px] flex size-4 items-center justify-center rounded-full border border-[#999] bg-[#2d3131] text-[10px]">8</span>
        </span>
        <span className="mr-[4px] ml-[7px] h-10 w-px bg-[#68797a]" />
      </div>
    </div>
  );
}

export default function App() {
  return (
    <div className="flex h-[768px] w-[1360px] flex-col overflow-hidden">
      <TabStrip />
      <Toolbar />
      <Page />
      <DownloadBar />
      <Taskbar />
    </div>
  );
}
